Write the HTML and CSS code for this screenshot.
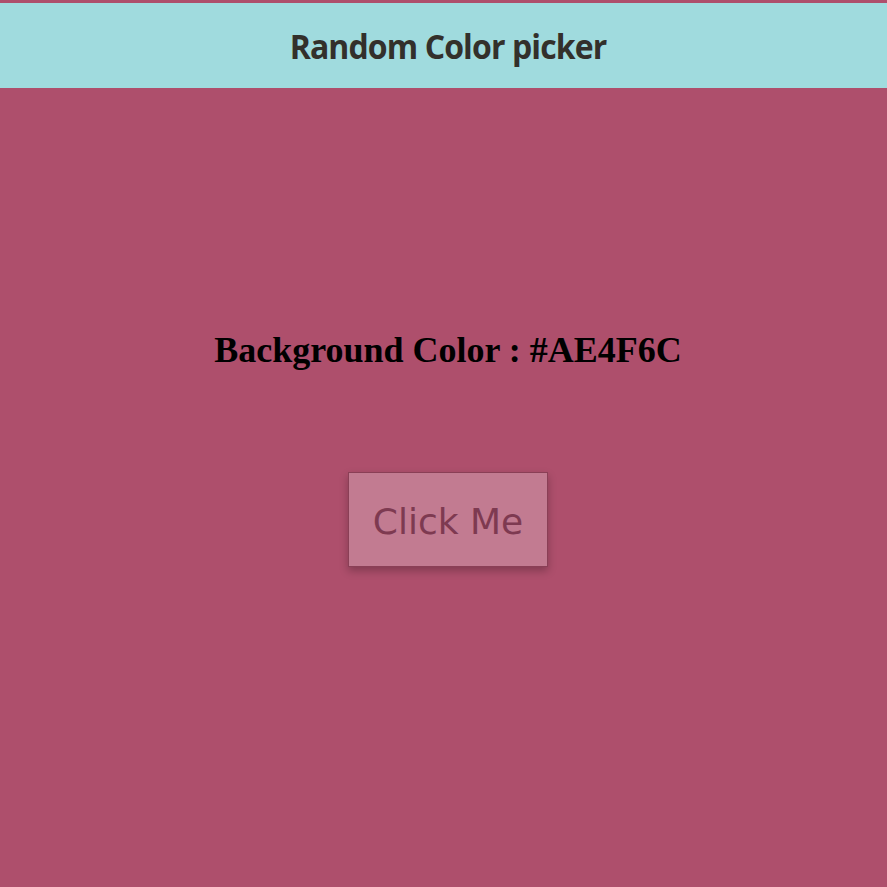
FILE: index.html
```html
<!DOCTYPE html>
<html>
<head>
<meta charset="utf-8">
<link rel="stylesheet" href="styles.css">
</head>
<body>
<header class="top">
  <h1 class="title">Random Color picker</h1>
</header>
<main class="content">
  <h2 class="label">Background Color : #AE4F6C</h2>
  <button class="btn">Click Me</button>
</main>
</body>
</html>
```
FILE: styles.css
```css
html, body {
  margin: 0;
  padding: 0;
  background: #ae4f6c;
  height: 100%;
}
body {
  padding-top: 3px;
  box-sizing: border-box;
}
.top {
  background: #a0dbde;
  height: 85px;
  display: flex;
  align-items: center;
  justify-content: center;
  padding-left: 9px;
}
.title {
  margin: 0;
  font-family: "Open Sans", sans-serif;
  font-weight: 700;
  font-size: 32px;
  color: #33302b;
  letter-spacing: -0.9px;
  transform: scaleY(1.08);
}
.content {
  display: flex;
  flex-direction: column;
  align-items: center;
  padding-top: 242px;
  padding-left: 9px;
}
.label {
  margin: 0;
  font-family: "Liberation Serif", serif;
  font-weight: bold;
  font-size: 36px;
  line-height: 40px;
  color: #000;
}
.btn {
  margin-top: 102px;
  width: 200px;
  height: 95px;
  background: rgba(255, 255, 255, 0.25);
  border: 1px solid #8a3f56;
  color: #7e3a51;
  font-family: "DejaVu Sans", sans-serif;
  font-size: 36px;
  box-shadow: 0 4px 8px rgba(0, 0, 0, 0.25);
  padding: 3px 0 0 0;
}
```
